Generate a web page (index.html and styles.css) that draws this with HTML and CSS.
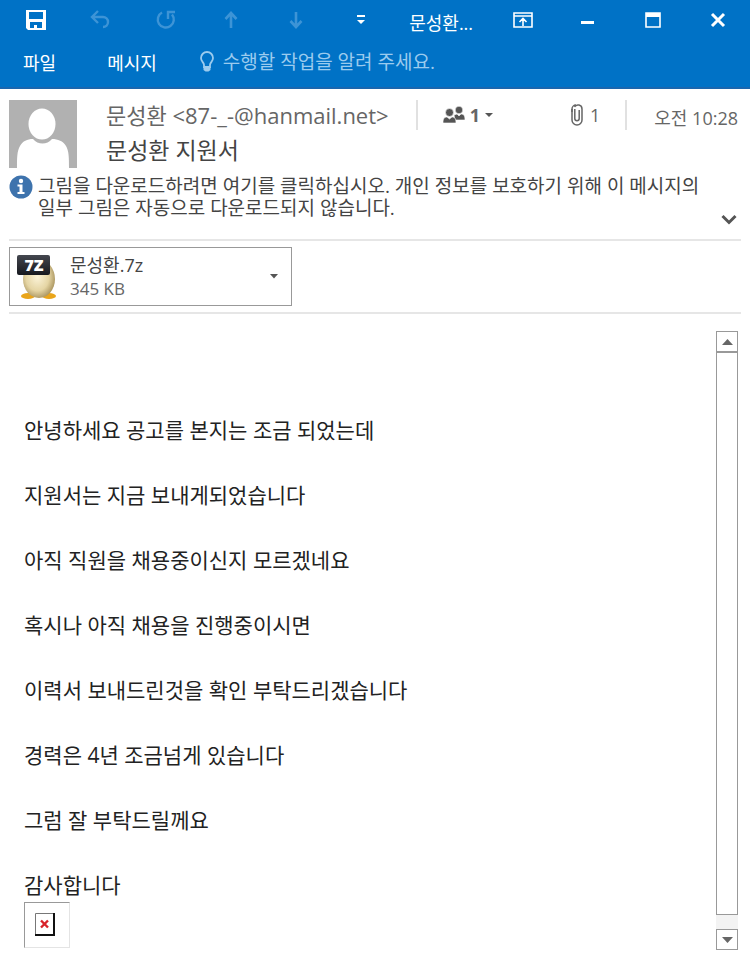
FILE: index.html
```html
<!DOCTYPE html>
<html lang="ko">
<head>
    <meta charset="UTF-8">
    <meta name="viewport" content="width=device-width, initial-scale=1.0">
    <title>문성환 지원서</title>
    <link rel="stylesheet" href="styles.css">
</head>
<body>

<header class="top">
    <div class="title-bar">
        <button type="button" aria-label="저장">
            <svg width="22" height="22" viewBox="0 0 22 22"><path d="M1 1h20v20H3l-2-2z" fill="#fff"/><path d="M4 3h14v7H4zM5 13h12v6h-5v-3H9v3H5z" fill="#0072c6"/></svg>
        </button>
        <button type="button" class="dim" aria-label="실행 취소">
            <svg width="22" height="22" viewBox="0 0 22 22"><path d="M8 2L2 8l6 6M2 8h11a5 5 0 0 1 0 10" fill="none" stroke="currentColor" stroke-width="2.4"/></svg>
        </button>
        <button type="button" class="dim" aria-label="다시 실행">
            <svg width="22" height="22" viewBox="0 0 22 22"><path d="M7 3.500A8 8 0 1 0 17 5.500M13 10V3h7" fill="none" stroke="currentColor" stroke-width="2.4"/></svg>
        </button>
        <button type="button" class="dim" aria-label="이전 항목">
            <svg width="22" height="22" viewBox="0 0 22 22"><path d="M11 19V4M5.500 10L11 4l5.500 6" fill="none" stroke="currentColor" stroke-width="2.6"/></svg>
        </button>
        <button type="button" class="dim" aria-label="다음 항목">
            <svg width="22" height="22" viewBox="0 0 22 22"><path d="M11 3v15M5.500 12l5.500 6 5.500-6" fill="none" stroke="currentColor" stroke-width="2.6"/></svg>
        </button>
        <button type="button" aria-label="빠른 실행 도구 모음 사용자 지정">
            <svg width="10" height="12" viewBox="0 0 10 12"><path d="M1 1h8v2H1zM1 6h8l-4 4z" fill="#fff"/></svg>
        </button>
        <span class="window-title">문성환...</span>
        <button type="button" aria-label="리본 메뉴 표시 옵션">
            <svg width="20" height="16" viewBox="0 0 20 16"><path d="M1 1h18v14H1zM1 4h18M10 14V7M6.500 10L10 6.500l3.500 3.500" fill="none" stroke="#fff" stroke-width="1.600"/></svg>
        </button>
        <button type="button" aria-label="최소화">
            <svg width="14" height="16" viewBox="0 0 14 16"><path d="M0 9h13v3H0z" fill="#fff"/></svg>
        </button>
        <button type="button" aria-label="최대화">
            <svg width="16" height="16" viewBox="0 0 16 16"><path d="M1 1h14v14H1z" fill="none" stroke="#fff" stroke-width="1.600"/><path d="M1 1h14v4H1z" fill="#fff"/></svg>
        </button>
        <button type="button" aria-label="닫기">
            <svg width="16" height="16" viewBox="0 0 16 16"><path d="M2 2l12 12M14 2L2 14" stroke="#fff" stroke-width="3"/></svg>
        </button>
    </div>
    <nav class="ribbon">
        <button type="button">파일</button>
        <button type="button">메시지</button>
        <label class="tell-me">
            <svg width="16" height="22" viewBox="0 0 16 22"><path d="M5 16v-2C5 11.500 2 10.500 2 7a6 6 0 0 1 12 0c0 3.500-3 4.500-3 7v2z" fill="none" stroke="currentColor" stroke-width="1.800"/><path d="M4.500 16h7v3l-2 1.500h-3l-2-1.500z" fill="currentColor"/></svg>
            <input type="text" aria-label="수행할 작업" placeholder="수행할 작업을 알려 주세요.">
        </label>
    </nav>
</header>

<main class="message">
    <section class="message-head">
        <svg class="avatar" width="68" height="68" viewBox="0 0 68 68"><path d="M0 0h68v68H0z" fill="#b1b1b1"/><ellipse cx="33" cy="24" rx="13.500" ry="15.500" fill="#fff"/><path d="M8 68c0-10 0-17 3-22 3-5 7-7 13-7 5 6 14 6 19 0 6 0 11 2 14 7s3 12 3 22z" fill="#fff"/></svg>
        <div class="details">
            <div class="from-row">
                <span class="sender">문성환 &lt;87-_-@hanmail.net&gt;</span>
                <button type="button" class="people" aria-label="받는 사람 1명">
                    <svg width="22" height="18" viewBox="0 0 22 18"><g fill="#555" stroke="#fff" stroke-width="0.600"><circle cx="16" cy="4" r="3.800"/><path d="M11 9l3-1 2 2 2-2c3 0 4 2 4 6H12z"/><circle cx="6.500" cy="6.500" r="4"/><path d="M0 17c0-4 1-6 4-6l2.500 2L9 11c3 0 4 2 4 6z"/></g></svg>
                    <b>1</b>
                    <svg width="8" height="4" viewBox="0 0 8 4"><path d="M0 0h8L4 4z" fill="#555"/></svg>
                </button>
                <span class="clip">
                    <svg width="12" height="22" viewBox="0 0 12 22"><path d="M8.200 6v8.500a2.200 2.200 0 0 1-4.400 0V5M1 5v11a5 5 0 0 0 10 0V5a4 4 0 0 0-7.500-2" fill="none" stroke="#666" stroke-width="1.500"/><path d="M1 8V5a4 4 0 0 1 4-4" fill="none" stroke="#666" stroke-width="1.500"/></svg>
                    1
                </span>
                <time class="time">오전 10:28</time>
            </div>
            <h1 class="subject">문성환 지원서</h1>
        </div>
    </section>

    <section class="info-bar">
        <svg class="info-icon" width="24" height="24" viewBox="0 0 24 24"><circle cx="12" cy="12" r="11.500" fill="#3e73ad"/><circle cx="12" cy="6" r="2.200" fill="#fff"/><path d="M8.500 9.500h5V17h2v2h-7v-2h2v-5.500h-2z" fill="#fff"/></svg>
        <p>그림을 다운로드하려면 여기를 클릭하십시오. 개인 정보를 보호하기 위해 이 메시지의<br>일부 그림은 자동으로 다운로드되지 않습니다.</p>
        <button type="button" class="expand" aria-label="머리글 확장">
            <svg width="16" height="11" viewBox="0 0 16 11"><path d="M1.500 2L8 8.500 14.500 2" fill="none" stroke="#555" stroke-width="3"/></svg>
        </button>
    </section>

    <section class="attachments">
        <button type="button" class="attachment">
            <svg width="40" height="46" viewBox="0 0 40 46">
                <defs>
                    <radialGradient id="egg" cx="45%" cy="45%" r="60%">
                        <stop offset="0" stop-color="#fbf3d8"/>
                        <stop offset="0.6" stop-color="#e5d5a4"/>
                        <stop offset="1" stop-color="#a38d57"/>
                    </radialGradient>
                    <linearGradient id="plate" x1="0" y1="0" x2="0" y2="1">
                        <stop offset="0" stop-color="#44474f"/>
                        <stop offset="1" stop-color="#17191f"/>
                    </linearGradient>
                </defs>
                <ellipse cx="11" cy="42" rx="7" ry="3" fill="#e9a51b"/>
                <ellipse cx="32" cy="42" rx="7" ry="3" fill="#e9a51b"/>
                <ellipse cx="22" cy="25" rx="16" ry="19" fill="url(#egg)"/>
                <rect x="0" y="1" width="33" height="20" rx="2" fill="url(#plate)"/>
                <text class="plate-text" x="17" y="17">7Z</text>
            </svg>
            <span class="file">
                <span class="file-name">문성환.7z</span>
                <span class="file-size">345 KB</span>
            </span>
            <svg width="8" height="5" viewBox="0 0 8 5"><path d="M0 0h8L4 4.500z" fill="#555"/></svg>
        </button>
    </section>

    <section class="content">
        <article class="letter">
            <p>안녕하세요 공고를 본지는 조금 되었는데</p>
            <p>지원서는 지금 보내게되었습니다</p>
            <p>아직 직원을 채용중이신지 모르겠네요</p>
            <p>혹시나 아직 채용을 진행중이시면</p>
            <p>이력서 보내드린것을 확인 부탁드리겠습니다</p>
            <p>경력은 4년 조금넘게 있습니다</p>
            <p>그럼 잘 부탁드릴께요</p>
            <p>감사합니다</p>
            <div class="blocked-image">
                <svg width="20" height="23" viewBox="0 0 20 23"><path d="M0.500 0.500h18v21h-18z" fill="#fff" stroke="#777"/><path d="M19 0v22H0" fill="none" stroke="#111" stroke-width="2"/><path d="M6 7.500l7 7M13 7.500l-7 7" stroke="#d8232a" stroke-width="2.400"/></svg>
            </div>
        </article>
        <div class="scrollbar">
            <button type="button" aria-label="위로">
                <svg width="11" height="6" viewBox="0 0 11 6"><path d="M0 6h11L5.500 0z" fill="#666"/></svg>
            </button>
            <div class="thumb"></div>
            <button type="button" aria-label="아래로">
                <svg width="11" height="6" viewBox="0 0 11 6"><path d="M0 0h11L5.500 6z" fill="#666"/></svg>
            </button>
        </div>
    </section>
</main>

</body>
</html>
```

FILE: styles.css
```css
* {
    box-sizing: border-box;
}

body {
    display: flex;
    flex-direction: column;
    min-height: 100vh;
    margin: 0;
    font-family: "Open Sans", "Noto Sans CJK KR", sans-serif;
    font-size: 18px;
    color: #444;
    background-color: #fff;
}

button {
    display: flex;
    align-items: center;
    justify-content: center;
    padding: 0;
    border: none;
    background: none;
    font: inherit;
    color: inherit;
    cursor: pointer;
}

svg {
    display: block;
    flex: none;
}

h1, p {
    margin: 0;
    font-weight: normal;
}

/* title bar and ribbon */
.top {
    background-color: #0072c6;
    border-bottom: 2px solid #1a66ae;
    color: #fff;
}

.title-bar {
    display: grid;
    grid-template-columns: repeat(6, 2fr) 3fr repeat(4, 2fr);
    align-items: center;
    height: 40px;
    padding-left: 4px;
}

.title-bar button {
    height: 40px;
}

.title-bar .dim {
    color: #3d94d6;
}

.window-title {
    padding: 6px 0 0 16px;
    line-height: 24px;
    white-space: nowrap;
}

.ribbon {
    display: flex;
    align-items: center;
    height: 47px;
    padding: 0 23px 4px;
}

.ribbon button {
    margin-right: 51px;
}

.ribbon button + button {
    margin-right: 42px;
}

.tell-me {
    display: flex;
    flex: 1;
    align-items: center;
    gap: 8px;
    color: #9bcbee;
}

.tell-me input {
    flex: 1;
    padding: 0;
    border: none;
    outline: none;
    background: none;
    font: inherit;
    font-size: 19px;
    color: #fff;
}

.tell-me input::placeholder {
    color: #9bcbee;
    opacity: 1;
}

/* message header */
.message {
    display: flex;
    flex: 1;
    flex-direction: column;
    padding: 11px 9px 0;
}

.message-head {
    display: flex;
    gap: 29px;
}

.details {
    flex: 1;
}

.from-row {
    display: flex;
    align-items: center;
    height: 30px;
    color: #666;
}

.sender {
    flex: 1;
    font-size: 22px;
    line-height: 30px;
    white-space: nowrap;
}

.people {
    gap: 5px;
    height: 30px;
    padding-left: 25px;
    border-left: 2px solid #e1e1e1;
}

.clip {
    display: flex;
    align-items: center;
    gap: 7px;
    height: 30px;
    margin-left: 78px;
    padding-right: 25px;
    border-right: 2px solid #e1e1e1;
}

.time {
    padding: 4px 3px 0 27px;
}

.subject {
    font-size: 23px;
    line-height: 40px;
}

.info-bar {
    display: flex;
    gap: 5px;
    padding: 5px 4px 20px 0;
    border-bottom: 2px solid #e6e6e6;
    font-size: 19px;
    line-height: 22px;
}

.info-bar p {
    flex: 1;
}

.expand {
    align-self: flex-end;
    height: 16px;
    margin-bottom: -8px;
}

/* attachment */
.attachments {
    padding: 6px 0;
    border-bottom: 2px solid #e6e6e6;
}

.attachment {
    gap: 13px;
    width: 283px;
    height: 59px;
    padding: 0 13px 0 7px;
    border: 1px solid #999;
    text-align: left;
}

.file {
    display: flex;
    flex: 1;
    flex-direction: column;
    line-height: 23px;
}

.file-size {
    font-size: 17px;
    color: #666;
}

.plate-text {
    fill: #fff;
    font-size: 16px;
    font-weight: 800;
    text-anchor: middle;
}

/* mail text */
.content {
    display: flex;
    flex: 1;
    padding: 17px 3px 15px 15px;
}

.letter {
    flex: 1;
    padding-top: 67px;
    font-size: 21px;
    line-height: 65px;
    color: #222;
}

.blocked-image {
    width: 46px;
    height: 46px;
    margin-top: -16px;
    padding: 10px;
    border: 1px solid #e4e4e4;
    border-top-color: #999;
    border-left-color: #999;
}

.scrollbar {
    display: flex;
    flex-direction: column;
    width: 22px;
    background-color: #f3f3f3;
}

.scrollbar button {
    height: 21px;
    border: 1px solid #999;
    background-color: #fff;
}

.thumb {
    flex: 1;
    margin-bottom: 14px;
    border: 1px solid #999;
    background-color: #fff;
}
```
